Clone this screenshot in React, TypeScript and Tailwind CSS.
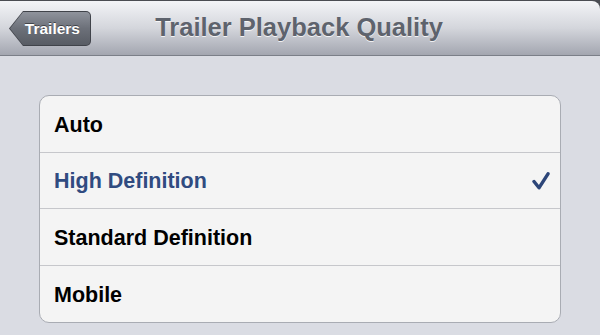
const options = [
    { label: "Auto", selected: false },
    { label: "High Definition", selected: true },
    { label: "Standard Definition", selected: false },
    { label: "Mobile", selected: false },
];

function CheckMark() {
    return (
        <svg width="18" height="18" viewBox="0 0 18 18" className="text-[#2c4578]">
            <path
                d="M2 9.5 L7 15.8 L16 1.8"
                fill="none"
                stroke="currentColor"
                strokeWidth="3.4"
                strokeLinecap="round"
                strokeLinejoin="round"
            />
        </svg>
    );
}

export default function App() {
    return (
        <div className="w-[600px] h-[335px] overflow-hidden bg-[#dadce3] font-['Liberation_Sans',Arial,sans-serif]">
            {/* Nav bar */}
            <div className="bg-[#4a4c52] pt-px">
                <div className="relative h-[55px] rounded-tr-[8px] border-b border-[#7b7f88] bg-gradient-to-b from-[#f3f4f7] via-[#d4d6dc] to-[#a3a6b0] flex items-center justify-center">
                    <div className="absolute left-[9px] top-[10px] h-[35px] w-[82px] rounded-r-[5px] bg-[#40434a] [clip-path:polygon(14px_0,100%_0,100%_100%,14px_100%,0_50%)]">
                        <div className="absolute inset-px rounded-r-[4px] bg-gradient-to-b from-[#8f939c] via-[#6c7079] to-[#585c64] [clip-path:polygon(13px_0,100%_0,100%_100%,13px_100%,0_50%)] flex items-center justify-end pr-[10px]">
                            <span className="text-white text-[15.5px] font-bold [text-shadow:0_-1px_0_rgba(0,0,0,0.45)]">
                                Trailers
                            </span>
                        </div>
                    </div>
                    <h1 className="text-[25.5px] font-bold text-[#5e636d] [text-shadow:0_1px_0_rgba(255,255,255,0.8)] -mt-[2px] -ml-[2px]">
                        Trailer Playback Quality
                    </h1>
                </div>
            </div>

            {/* Options table */}
            <div className="mx-[39px] mt-[39px] rounded-[10px] border border-[#a9acb3] bg-[#f4f4f4] overflow-hidden">
                {options.map((opt, i) => (
                    <div
                        key={opt.label}
                        className={[
                            "h-[56.5px] flex items-center justify-between pl-[14px] pr-[10px] pt-[2px]",
                            i < options.length - 1 ? "border-b border-[#c6c7cb]" : "",
                        ]
                            .filter(Boolean)
                            .join(" ")}
                    >
                        <span
                            className={[
                                "text-[21.5px] font-bold",
                                opt.selected ? "text-[#304b80]" : "text-black",
                            ].join(" ")}
                        >
                            {opt.label}
                        </span>
                        {opt.selected && <CheckMark />}
                    </div>
                ))}
            </div>
        </div>
    );
}
